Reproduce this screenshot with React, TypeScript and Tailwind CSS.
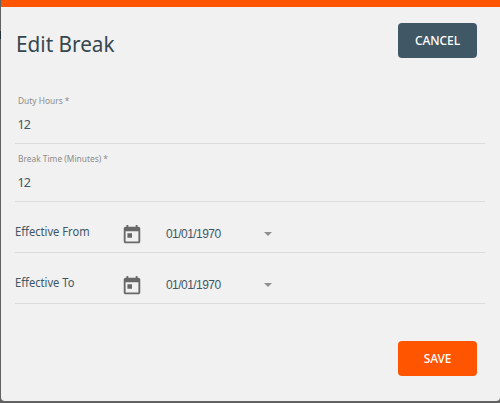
import React from "react";

function Field({ label, value }: { label: string; value: string }) {
  return (
    <div className="flex h-[58px] flex-col border-b border-[#dcdcdc] pl-[2.5px]">
      <label className="mt-[9px] h-3 origin-left scale-x-[0.93] self-start whitespace-nowrap text-[9px] leading-3 text-[#8c8c8c]">
        {label}
      </label>
      <span className="mt-[10px] self-start text-[12.5px] leading-4 tracking-[-0.8px] text-[#3f5765]">{value}</span>
    </div>
  );
}

function DateRow({ label, value }: { label: string; value: string }) {
  return (
    <div className="flex h-[51px] border-b border-[#dcdcdc] pt-[21px]">
      <div className="w-[106px] pt-px">
        <span className="block origin-left scale-x-[0.93] whitespace-nowrap text-[12px] leading-4 text-[#3f5765]">
          {label}
        </span>
      </div>
      <svg viewBox="0 0 24 24" className="mt-[0.5px] h-[22px] w-[22px] shrink-0 fill-[#686868]">
        <path d="M19 3h-1V1h-2v2H8V1H6v2H5c-1.11 0-1.99.9-1.99 2L3 19c0 1.1.89 2 2 2h14c1.1 0 2-.9 2-2V5c0-1.1-.9-2-2-2zm0 16H5V8h14v11zM7 10h5v5H7z" />
      </svg>
      <div className="ml-[23px] mt-[3px] flex w-[105.5px] items-center justify-between self-start">
        <span className="font-['Liberation_Sans',sans-serif] text-[12px] leading-4 tracking-[-0.55px] text-[#3f5765]">
          {value}
        </span>
        <svg viewBox="0 0 8 4" className="h-1 w-2 fill-[#8f8f8f]">
          <path d="M0 0h8L4 4z" />
        </svg>
      </div>
    </div>
  );
}

export default function App() {
  return (
    <main className="relative h-[403px] w-[500px] overflow-hidden bg-[#626262] pb-[2px] pl-px font-['Noto_Sans',sans-serif]">
      <span className="absolute left-0 top-[31px] h-2 w-px bg-[#26323a]" />
      <section className="flex h-[401px] flex-col rounded-b-[4px] border-t-[7px] border-[#ff5500] bg-[#f1f1f1] pl-[14px] pr-[15px]">
        <header className="flex h-[79px] justify-between pr-[8px] pt-4">
          <h1 className="ml-[0.5px] mt-[7px] h-7 origin-left scale-x-[0.965] whitespace-nowrap text-[21.5px] leading-7 text-[#36474f]">
            Edit Break
          </h1>
          <button className="h-[35px] w-[79px] rounded-[4px] bg-[#405866] text-[12px] font-medium tracking-[-0.1px] text-white">
            CANCEL
          </button>
        </header>
        <Field label="Duty Hours *" value="12" />
        <Field label="Break Time (Minutes) *" value="12" />
        <DateRow label="Effective From" value="01/01/1970" />
        <DateRow label="Effective To" value="01/01/1970" />
        <footer className="flex justify-end pr-[8px] pt-[37px]">
          <button className="h-[35px] w-[79px] rounded-[4px] bg-[#ff5500] text-[12px] font-medium tracking-[-0.1px] text-white">
            SAVE
          </button>
        </footer>
      </section>
    </main>
  );
}
